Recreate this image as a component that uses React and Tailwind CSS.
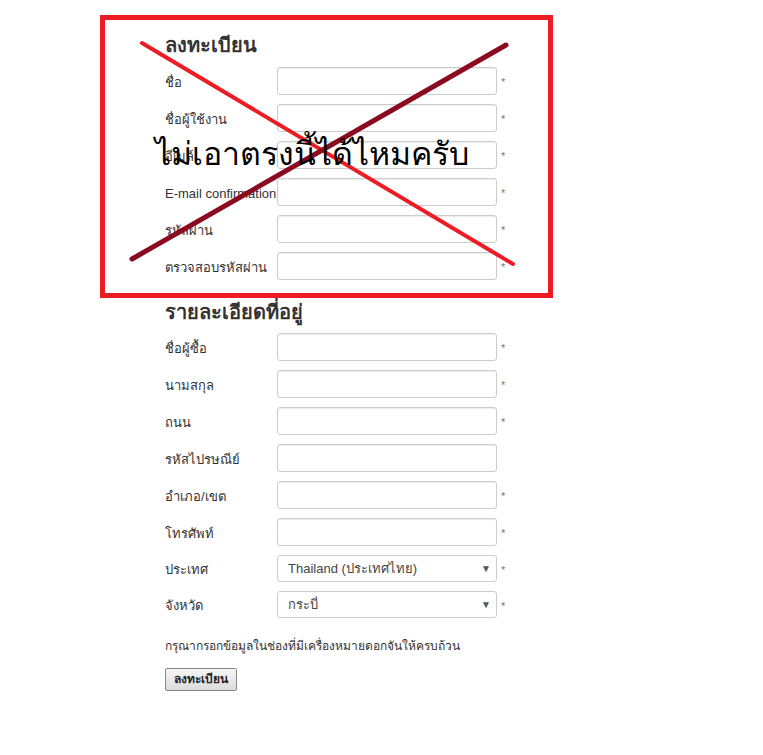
import React from "react";

const sectionOne = [
  { label: "ชื่อ", required: true },
  { label: "ชื่อผู้ใช้งาน", required: true },
  { label: "อีเมล์", required: true },
  { label: "E-mail confirmation", required: true },
  { label: "รหัสผ่าน", required: true },
  { label: "ตรวจสอบรหัสผ่าน", required: true },
];

const sectionTwo = [
  { label: "ชื่อผู้ซื้อ", required: true },
  { label: "นามสกุล", required: true },
  { label: "ถนน", required: true },
  { label: "รหัสไปรษณีย์", required: false },
  { label: "อำเภอ/เขต", required: true },
  { label: "โทรศัพท์", required: true },
];

const Field = ({ label, required }) => (
  <div className="flex items-center h-[28px]">
    <label className="w-[112px] shrink-0 pt-[3px] text-[13px] text-[#333] whitespace-nowrap">
      {label}
    </label>
    <input
      type="text"
      className="w-[220px] h-[28px] rounded-[3px] border border-[#ccc] bg-white shadow-[inset_0_1px_1px_rgba(0,0,0,0.075)] focus:outline-none"
    />
    {required && <span className="ml-[4px] pt-[3px] text-[11px] text-[#777]">*</span>}
  </div>
);

const SelectField = ({ label, value }) => (
  <div className="flex items-center h-[27px]">
    <label className="w-[112px] shrink-0 pt-[2px] text-[13px] text-[#333]">{label}</label>
    <div className="w-[220px] h-[27px] rounded-[3px] border border-[#ccc] bg-white flex items-center justify-between pl-[10px] pr-[5px]">
      <span className="text-[13px] text-[#444]">{value}</span>
      <span className="text-[10px] text-[#555]">▼</span>
    </div>
    <span className="ml-[4px] pt-[3px] text-[11px] text-[#777]">*</span>
  </div>
);

export default function App() {
  return (
    <div
      className="relative w-[763px] h-[755px] bg-white"
      style={{ fontFamily: '"Liberation Sans", Tahoma, sans-serif' }}
    >
      <div className="flex flex-col pl-[165px] pt-[33px]">
        <h2 className="text-[20px] font-bold text-[#333] leading-[24px]">ลงทะเบียน</h2>
        <div className="flex flex-col gap-[9px] mt-[10px]">
          {sectionOne.map((f) => (
            <Field key={f.label} {...f} />
          ))}
        </div>

        <h2 className="text-[20px] font-bold text-[#333] leading-[24px] mt-[20px]">
          รายละเอียดที่อยู่
        </h2>
        <div className="flex flex-col gap-[9px] mt-[9px]">
          {sectionTwo.map((f) => (
            <Field key={f.label} {...f} />
          ))}
          <SelectField label="ประเทศ" value="Thailand (ประเทศไทย)" />
          <SelectField label="จังหวัด" value="กระบี่" />
        </div>

        <p className="text-[12px] text-[#333] mt-[19px]">
          กรุณากรอกข้อมูลในช่องที่มีเครื่องหมายดอกจันให้ครบถ้วน
        </p>
        <div className="mt-[11px]">
          <button className="h-[23px] px-[8px] text-[12px] font-bold text-[#222] border border-[#888] rounded-[2px] bg-gradient-to-b from-[#f6f6f6] to-[#dcdcdc]">
            ลงทะเบียน
          </button>
        </div>
      </div>

      {/* annotation overlay */}
      <div className="absolute left-[100px] top-[15px] w-[453px] h-[283px] border-[5px] border-[#ed1c24] pointer-events-none" />
      <svg
        className="absolute left-0 top-0 pointer-events-none"
        width="763"
        height="755"
      >
        <line x1="142" y1="43" x2="513" y2="264" stroke="#ed1c24" strokeWidth="4" strokeLinecap="round" />
        <line x1="132" y1="259" x2="506" y2="45" stroke="#8b0a1f" strokeWidth="5" strokeLinecap="round" />
      </svg>
      <div className="absolute left-[155px] top-[132px] text-[32px] leading-[44px] text-black whitespace-nowrap pointer-events-none">
        ไม่เอาตรงนี้ได้ไหมครับ
      </div>
    </div>
  );
}
